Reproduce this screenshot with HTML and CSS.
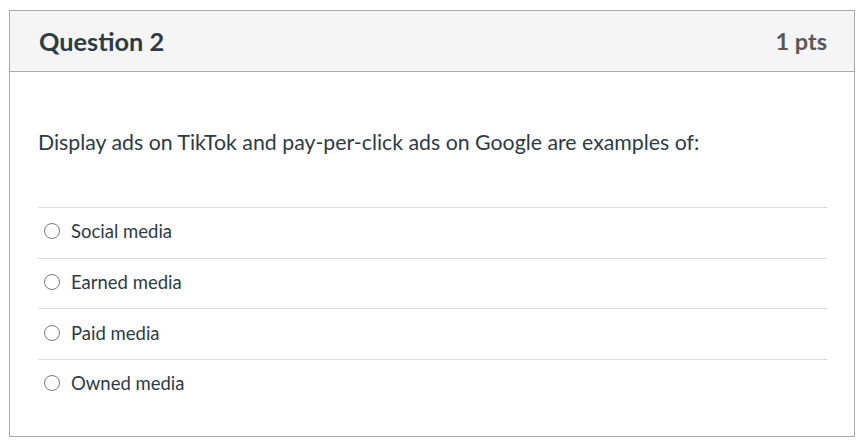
FILE: index.html
```html
<!DOCTYPE html>
<html>
<head>
<meta charset="utf-8">
<link rel="stylesheet" href="styles.css">
</head>
<body>
<div class="card">
  <div class="header">
    <h2 class="title">Question 2</h2>
    <div class="pts">1 pts</div>
  </div>
  <div class="content">
    <p class="question">Display ads on TikTok and pay-per-click ads on Google are examples of:</p>
    <div class="answers">
      <label class="answer"><span class="radio"></span><span>Social media</span></label>
      <label class="answer"><span class="radio"></span><span>Earned media</span></label>
      <label class="answer"><span class="radio"></span><span>Paid media</span></label>
      <label class="answer"><span class="radio"></span><span>Owned media</span></label>
    </div>
  </div>
</div>
</body>
</html>
```
FILE: styles.css
```css
html, body { margin: 0; padding: 0; background: #fff; }
body { padding: 10px 7px 0 9px; font-family: Lato, "Open Sans", sans-serif; color: #2d3b45; }
.card { border: 1px solid #aaaaaa; box-sizing: border-box; height: 427px; }
.header { display: flex; justify-content: space-between; align-items: center; height: 61px; box-sizing: border-box; background: #f5f5f5; border-bottom: 1px solid #aaaaaa; padding: 0 27px 0 29px; }
.title { margin: 0; font-size: 25.3px; font-weight: 700; color: #2d3b45; }
.pts { font-size: 23.5px; font-weight: 700; color: #585858; }
.content { padding: 0 27px 0 28px; }
.question { margin: 0; height: 135px; display: flex; align-items: center; font-size: 21.3px; padding-top: 5px; box-sizing: border-box; }
.answer { display: flex; align-items: center; height: 50.7px; border-top: 1px solid #dddddd; box-sizing: border-box; padding-left: 6px; padding-bottom: 3px; font-size: 18.5px; gap: 11px; }
.radio { width: 16px; height: 16px; border: 1px solid #7a7a7a; border-radius: 50%; box-sizing: border-box; }
```
